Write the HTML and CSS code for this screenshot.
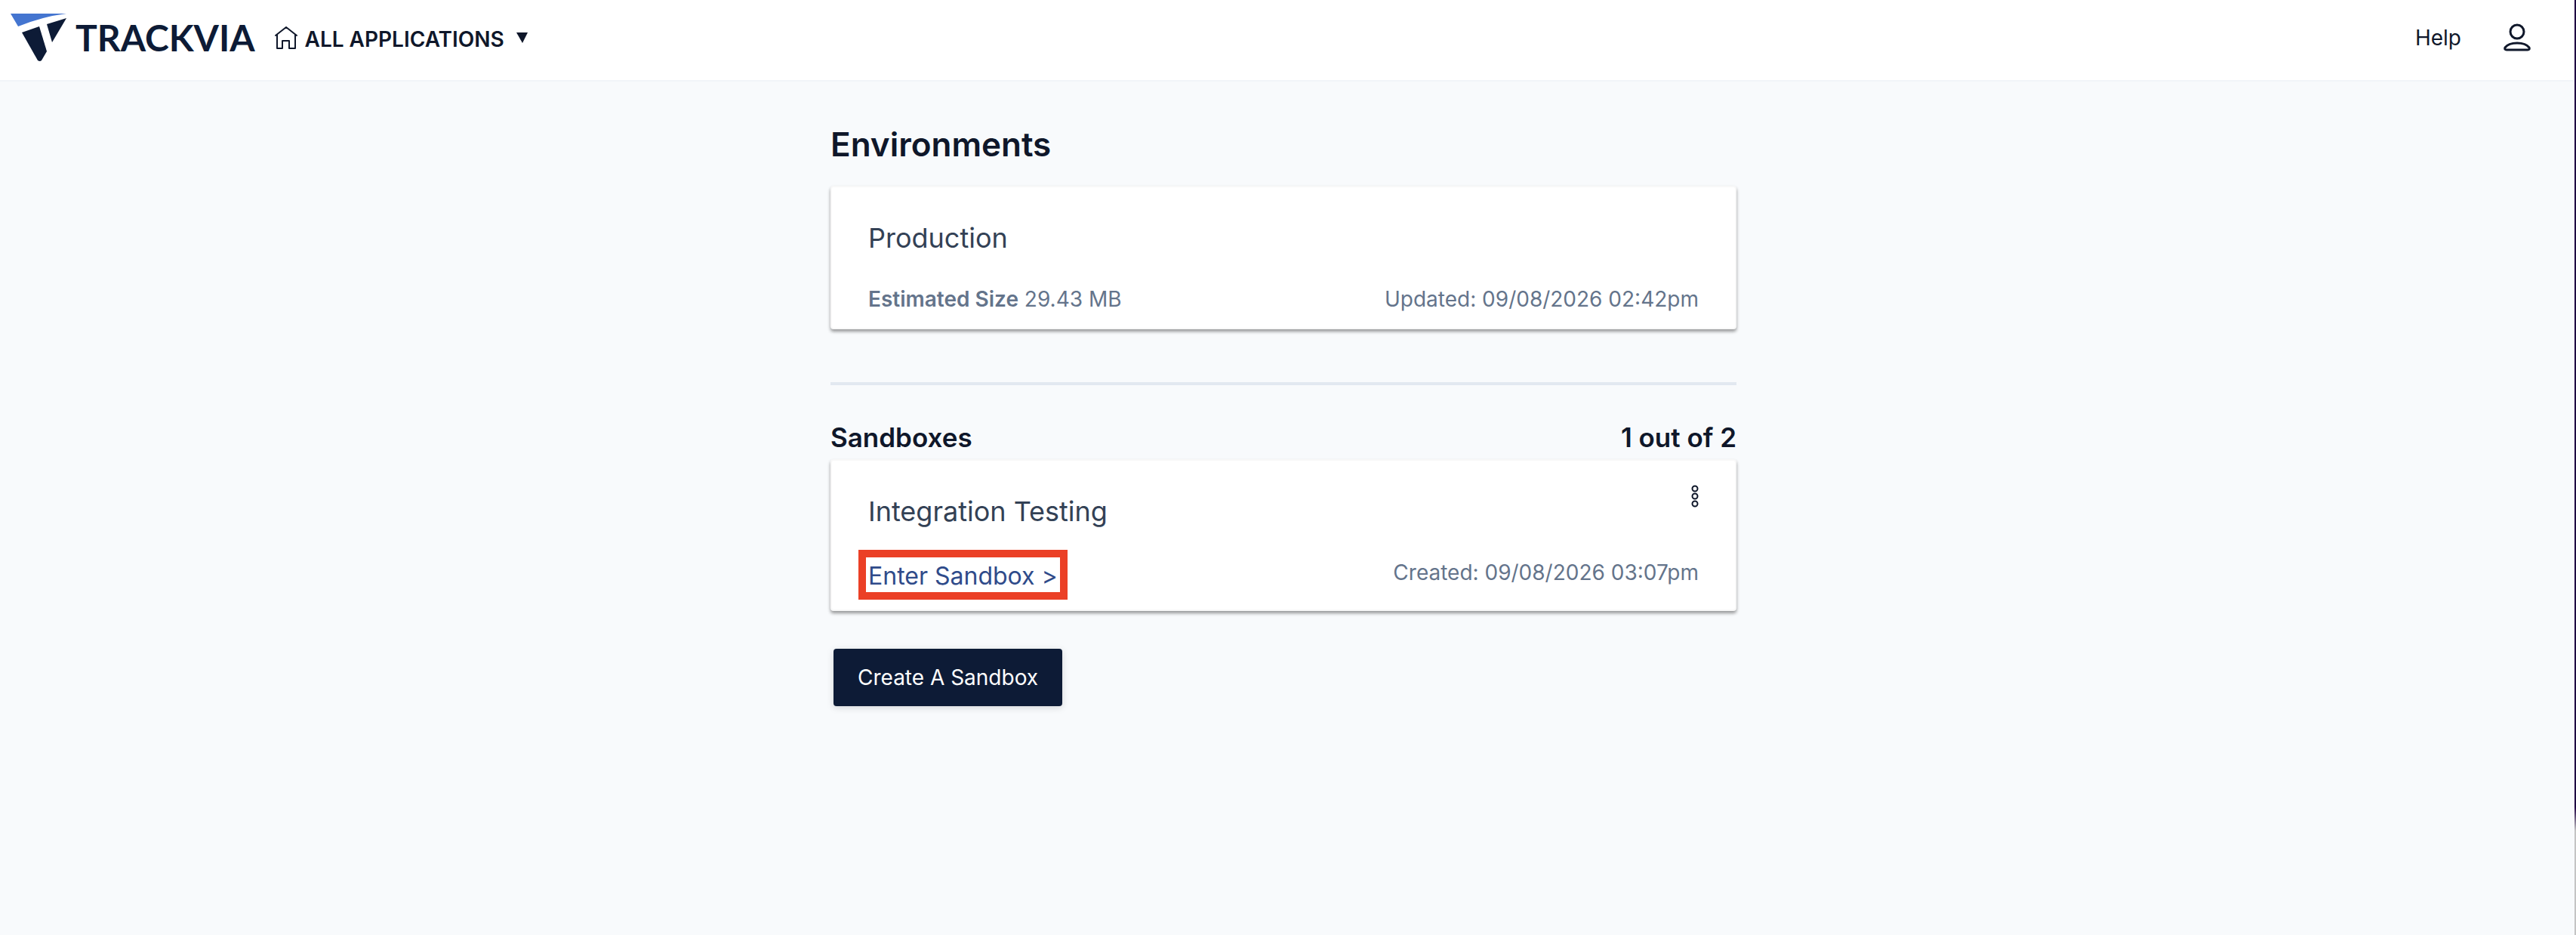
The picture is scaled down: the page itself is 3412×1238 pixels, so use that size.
FILE: index.html
```html
<!DOCTYPE html>
<html lang="en">
<head>
    <meta charset="UTF-8">
    <meta name="viewport" content="width=device-width, initial-scale=1.0">
    <title>Environments</title>
    <link rel="stylesheet" href="styles.css">
</head>
<body>
    <header class="topbar">
        <a class="logo" href="#">
            <svg class="logo-mark" width="76" height="66" viewBox="0 0 76 66" aria-hidden="true">
                <path fill="#4475d0" d="M0 1H74Q42 5 10 18Z"/>
                <path fill="#0d1b36" d="M15 26L38 18L48 51L41 63Q39 65 36 63Z"/>
                <path fill="#0d1b36" d="M48 15L74 7L55 39Z"/>
            </svg>
            <span class="logo-text">TRACKVIA</span>
        </a>
        <button class="app-menu" type="button">
            <svg width="30" height="32" viewBox="0 0 30 32" fill="none" stroke="#0f172a" stroke-width="2" stroke-linecap="round" stroke-linejoin="round" aria-hidden="true">
                <path d="M1 13L15 2L29 13M3 12V30H10V20H19V30H27V12"/>
            </svg>
            <span class="app-name">ALL APPLICATIONS</span>
            <svg class="caret" width="16" height="14" viewBox="0 0 16 14" aria-hidden="true">
                <path fill="#0f172a" d="M0 0H15L8 14Z"/>
            </svg>
        </button>
        <nav class="topbar-right">
            <a class="help" href="#">Help</a>
            <button class="user-menu" type="button" aria-label="Account">
                <svg width="36" height="38" viewBox="0 0 36 38" fill="none" stroke="#0f172a" stroke-width="3" aria-hidden="true">
                    <circle cx="18" cy="11" r="9"/>
                    <path stroke-linejoin="round" d="M4 35H32Q35 35 34 32C31 28 25 26 18 26S5 28 2 32Q1 35 4 35Z"/>
                </svg>
            </button>
        </nav>
    </header>
    <div class="page">
        <main>
            <h1>Environments</h1>
            <section class="card">
                <h3 class="card-title">Production</h3>
                <div class="card-info">
                    <span><b>Estimated Size</b> 29.43 MB</span>
                    <span>Updated: 09/08/2026 02:42pm</span>
                </div>
            </section>
            <hr>
            <div class="section-head">
                <h2>Sandboxes</h2>
                <h2>1 out of 2</h2>
            </div>
            <section class="card">
                <div class="card-head">
                    <h3 class="card-title">Integration Testing</h3>
                    <button class="card-menu" type="button" aria-label="Sandbox options">
                        <svg width="10" height="30" viewBox="0 0 10 30" fill="none" stroke="#0f172a" stroke-width="2" aria-hidden="true">
                            <circle cx="5" cy="5" r="3.5"/>
                            <circle cx="5" cy="15" r="3.5"/>
                            <circle cx="5" cy="25" r="3.5"/>
                        </svg>
                    </button>
                </div>
                <div class="card-info">
                    <a class="enter-link" href="#">Enter Sandbox &gt;</a>
                    <span>Created: 09/08/2026 03:07pm</span>
                </div>
            </section>
            <button class="create-button" type="button">Create A Sandbox</button>
        </main>
    </div>
</body>
</html>
```
FILE: styles.css
```css
* {
    box-sizing: border-box;
}
html {
    background: linear-gradient(#1e0042 1068px, #c4c4c4 1100px);
}
body {
    margin: 0 2px 0 0;
    min-height: 100vh;
    background-color: #f8fafc;
    color: #0f172a;
    font-family: Inter, sans-serif;
    font-size: 28px;
    line-height: 40px;
}
button {
    padding: 0;
    border: none;
    background: none;
    color: inherit;
    font: inherit;
    cursor: pointer;
}
a {
    color: inherit;
    text-decoration: none;
}
svg {
    display: block;
}
h1, h2, h3 {
    margin: 0;
}
.topbar {
    display: flex;
    align-items: center;
    height: 108px;
    padding: 0 58px 6px 14px;
    background-color: #fff;
    border-bottom: 2px solid #f1f5f9;
}
.logo {
    display: flex;
    align-items: center;
    gap: 10px;
    margin-right: 26px;
    color: #0d1b36;
}
.logo-text {
    font-family: Lato, sans-serif;
    font-size: 48px;
    font-weight: 700;
}
.app-menu {
    display: flex;
    align-items: center;
    gap: 10px;
}
.app-name {
    padding-top: 4px;
    font-weight: 600;
}
.caret {
    margin-left: 6px;
}
.topbar-right {
    display: flex;
    align-items: center;
    gap: 56px;
    margin-left: auto;
}
.page {
    padding-right: 10px;
}
main {
    width: 1200px;
    max-width: 100%;
    margin: 0 auto;
    padding: 56px 0;
}
h1 {
    margin-bottom: 28px;
    font-size: 44px;
    line-height: 54px;
    font-weight: 600;
}
h2 {
    font-size: 35px;
    line-height: 46px;
    font-weight: 600;
}
hr {
    height: 4px;
    margin: 70px 0 46px;
    border: none;
    background-color: #e2e8f0;
}
.section-head {
    display: flex;
    justify-content: space-between;
    margin-bottom: 6px;
}
.card {
    padding: 39px 48px 18px;
    background-color: #fff;
    border: 2px solid #f8f8f8;
    border-radius: 4px;
    box-shadow: 0 3px 4px rgba(0, 0, 0, 0.4);
}
.card-head {
    display: flex;
    justify-content: space-between;
    align-items: flex-start;
}
.card-title {
    color: #334155;
    font-size: 36px;
    line-height: 56px;
    font-weight: 400;
}
.card-menu {
    margin-top: -7px;
}
.card-info {
    display: flex;
    justify-content: space-between;
    align-items: flex-start;
    margin-top: 33px;
    color: #64748b;
}
.card-info b {
    font-weight: 600;
}
.enter-link {
    margin: 3px 0 8px;
    padding-top: 4px;
    outline: 10px solid #eb4026;
    outline-offset: 3px;
    color: #2f4b8a;
    font-size: 32px;
    line-height: 36px;
}
.create-button {
    height: 76px;
    margin: 50px 4px 0;
    padding: 0 32px;
    border-radius: 4px;
    background-color: #0d1b36;
    box-shadow: 0 2px 10px rgba(0, 0, 0, 0.15);
    color: #fff;
}
```
